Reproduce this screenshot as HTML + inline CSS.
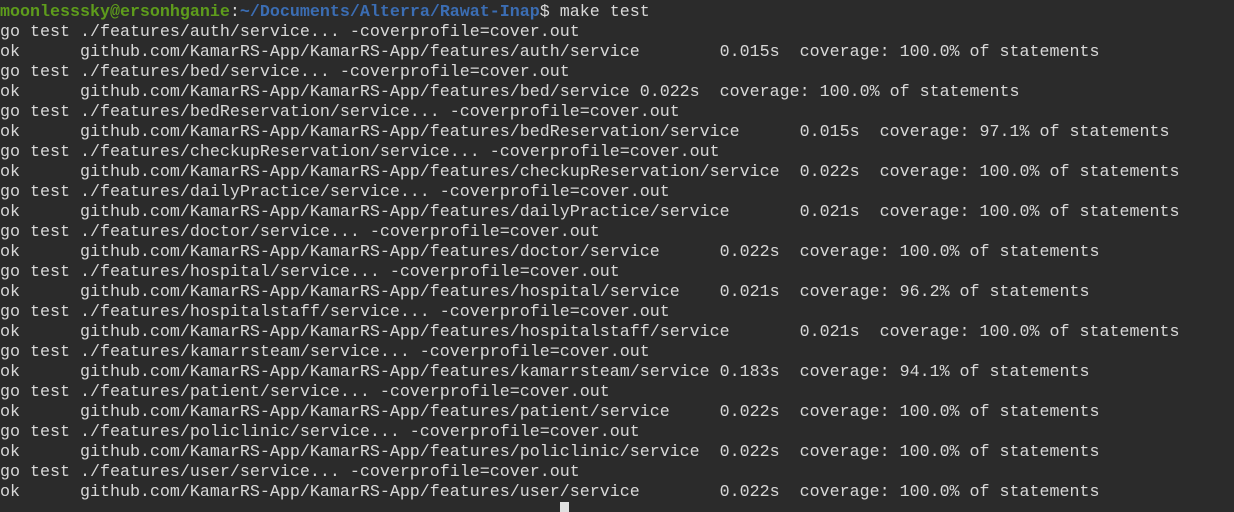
<!DOCTYPE html>
<html><head><meta charset="utf-8"><style>
html,body{margin:0;padding:0;background:#2b2b2b;width:1234px;height:505px;overflow:hidden}
pre{margin:0;position:absolute;left:0;top:3px;font-family:"Liberation Mono","DejaVu Sans Mono",monospace;font-size:16.67px;line-height:20px;color:#d8d8d8;white-space:pre}
.g{color:#5e9c1c;font-weight:bold}.b{color:#3b6db3;font-weight:bold}
.cur{position:absolute;left:560px;top:502px;width:9px;height:10px;background:#e0e0e0}
</style></head><body>
<pre><span class="g">moonlesssky@ersonhganie</span>:<span class="b">~/Documents/Alterra/Rawat-Inap</span>$ make test
go test ./features/auth/service... -coverprofile=cover.out
ok      github.com/KamarRS-App/KamarRS-App/features/auth/service        0.015s  coverage: 100.0% of statements
go test ./features/bed/service... -coverprofile=cover.out
ok      github.com/KamarRS-App/KamarRS-App/features/bed/service 0.022s  coverage: 100.0% of statements
go test ./features/bedReservation/service... -coverprofile=cover.out
ok      github.com/KamarRS-App/KamarRS-App/features/bedReservation/service      0.015s  coverage: 97.1% of statements
go test ./features/checkupReservation/service... -coverprofile=cover.out
ok      github.com/KamarRS-App/KamarRS-App/features/checkupReservation/service  0.022s  coverage: 100.0% of statements
go test ./features/dailyPractice/service... -coverprofile=cover.out
ok      github.com/KamarRS-App/KamarRS-App/features/dailyPractice/service       0.021s  coverage: 100.0% of statements
go test ./features/doctor/service... -coverprofile=cover.out
ok      github.com/KamarRS-App/KamarRS-App/features/doctor/service      0.022s  coverage: 100.0% of statements
go test ./features/hospital/service... -coverprofile=cover.out
ok      github.com/KamarRS-App/KamarRS-App/features/hospital/service    0.021s  coverage: 96.2% of statements
go test ./features/hospitalstaff/service... -coverprofile=cover.out
ok      github.com/KamarRS-App/KamarRS-App/features/hospitalstaff/service       0.021s  coverage: 100.0% of statements
go test ./features/kamarrsteam/service... -coverprofile=cover.out
ok      github.com/KamarRS-App/KamarRS-App/features/kamarrsteam/service 0.183s  coverage: 94.1% of statements
go test ./features/patient/service... -coverprofile=cover.out
ok      github.com/KamarRS-App/KamarRS-App/features/patient/service     0.022s  coverage: 100.0% of statements
go test ./features/policlinic/service... -coverprofile=cover.out
ok      github.com/KamarRS-App/KamarRS-App/features/policlinic/service  0.022s  coverage: 100.0% of statements
go test ./features/user/service... -coverprofile=cover.out
ok      github.com/KamarRS-App/KamarRS-App/features/user/service        0.022s  coverage: 100.0% of statements
</pre>
<div class="cur"></div>
</body></html>
